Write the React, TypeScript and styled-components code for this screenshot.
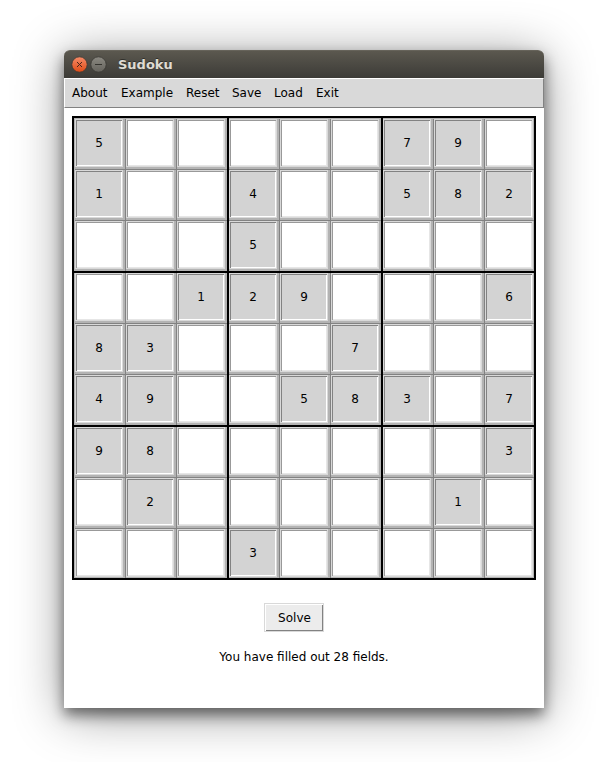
import React from 'react';
import styled, { createGlobalStyle } from 'styled-components';

const Global = createGlobalStyle`
  * { box-sizing: border-box; }
  body { margin: 0; background: #fff; overflow: hidden; font: 12px/14px "DejaVu Sans", sans-serif; color: #000; }
`;
const Desktop = styled.main`
  width: 606px; height: 762px; padding: 50px 62px 54px 64px; overflow: hidden;
`;
const Window = styled.section`
  width: 480px; height: 658px; background: #fff; border-radius: 6px 6px 0 0;
  display: flex; flex-direction: column; align-items: center;
  box-shadow: 0 7px 14px rgba(0,0,0,.5), 0 6px 50px rgba(0,0,0,.42);
`;
const TitleBar = styled.header`
  width: 100%; height: 28px; display: flex; align-items: center; padding-left: 7px;
  border-radius: 6px 6px 0 0; background: linear-gradient(#5b584f, #3c3b37);
  border-top: 1px solid #66635a;
`;
const Control = styled.svg`
  width: 17px; height: 17px; margin-right: 2px; display: block;
`;
const Title = styled.h1`
  margin: 1px 0 0 9px; font: bold 13px/16px "DejaVu Sans", sans-serif;
  color: #dfdbd2; text-shadow: 0 -1px #302f2b;
`;
const MenuBar = styled.nav`
  width: 100%; height: 30px; background: #d9d9d9; padding: 7px 0 0 7px;
  display: grid; grid-template-columns: 49px 65px 46px 42px 42px auto;
  border: 1px solid; border-color: #fff #828282 #828282 #fff;
`;
const MenuItem = styled.span`white-space: nowrap;`;
const Board = styled.div`
  width: 464px; height: 464px; margin-top: 8px; border: 2px solid #000; background: #000;
  display: grid; grid-template-columns: 153px 152px 151px; grid-template-rows: 153px 152px 151px; gap: 2px;
`;
const Block = styled.div<{ $top: boolean; $left: boolean }>`
  display: grid; grid-template-columns: repeat(3, 51px); grid-template-rows: repeat(3, 51px);
  padding: ${p => (p.$top ? 1 : 0)}px 0 0 ${p => (p.$left ? 1 : 0)}px;
  overflow: hidden; background: #b3b3b3;
`;
const Cell = styled.div`
  width: 51px; height: 51px; background: #b3b3b3;
  border: solid #828282; border-width: 0 1px 1px 0;
`;
const Entry = styled.div<{ $given: boolean }>`
  width: 48px; height: 48px; border: 1px solid #d9d9d9;
  display: flex; align-items: center; justify-content: center;
  background: ${p => (p.$given ? '#d3d3d3' : '#fff')};
  box-shadow: ${p => (p.$given
    ? 'inset 1px 1px #828282, inset -1px -1px #fff'
    : 'inset 1px 1px #999, inset -1px -1px #e6e6e6')};
`;
const SolveButton = styled.button`
  width: 60px; height: 29px; margin: 23px 20px 0 0; padding: 0 0 0 1px; font: inherit; color: #000;
  border: 1px solid #d9d9d9; background: #ececec; box-shadow: inset 1px 1px #fff, inset -1px -1px #828282;
`;
const Status = styled.p`margin: 18px 0 0;`;

const rows = [
  '5.....79.', '1..4..582', '...5.....',
  '..129...6', '83...7...', '49..583.7',
  '98......3', '.2.....1.', '...3.....',
];
const triple = [0, 1, 2];
const menu = ['About', 'Example', 'Reset', 'Save', 'Load', 'Exit'];

export default function App() {
  return (
    <Desktop>
      <Global />
      <Window>
        <TitleBar>
          <Control viewBox="0 0 17 17">
            <defs><linearGradient id="close" x2="0" y2="1"><stop stopColor="#f58b68" /><stop offset="1" stopColor="#df4b16" /></linearGradient></defs>
            <circle cx="8.5" cy="8.5" r="7.7" fill="url(#close)" stroke="#3a3833" strokeWidth=".8" />
            <path d="m6 6 5 5m0-5-5 5" stroke="#49241a" strokeWidth="1" />
          </Control>
          <Control viewBox="0 0 17 17">
            <defs><linearGradient id="minimise" x2="0" y2="1"><stop stopColor="#8b8981" /><stop offset="1" stopColor="#65635d" /></linearGradient></defs>
            <circle cx="8.5" cy="8.5" r="7.7" fill="url(#minimise)" stroke="#3a3833" strokeWidth=".8" />
            <path d="M5 8.5h7" stroke="#35342f" />
          </Control>
          <Title>Sudoku</Title>
        </TitleBar>
        <MenuBar>{menu.map(item => <MenuItem key={item}>{item}</MenuItem>)}</MenuBar>
        <Board>
          {triple.map(br => triple.map(bc => (
            <Block key={`${br}${bc}`} $top={br === 0} $left={bc === 0}>
              {triple.map(r => triple.map(c => {
                const value = rows[br * 3 + r][bc * 3 + c];
                const given = value !== '.';
                return <Cell key={`${r}${c}`}><Entry $given={given}>{given ? value : null}</Entry></Cell>;
              }))}
            </Block>
          )))}
        </Board>
        <SolveButton>Solve</SolveButton>
        <Status>You have filled out 28 fields.</Status>
      </Window>
    </Desktop>
  );
}
